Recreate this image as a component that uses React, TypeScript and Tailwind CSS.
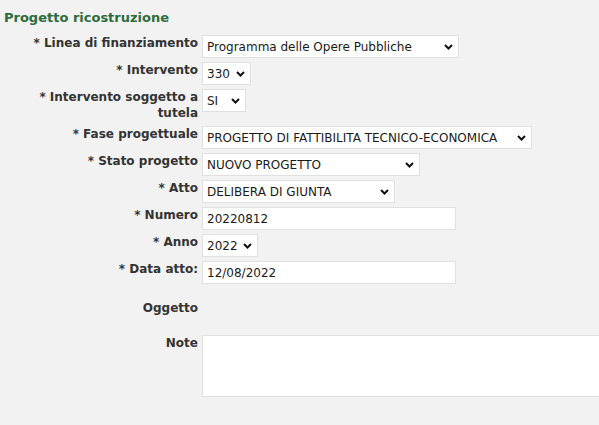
import type { ReactNode } from 'react';

const Chevron = () => (
    <svg
        className="pointer-events-none absolute right-[6px] top-[9px]"
        width="9"
        height="6"
        viewBox="0 0 9 6"
        fill="none"
    >
        <polyline points="1,1 4.5,4.5 8,1" stroke="#111" strokeWidth="2" />
    </svg>
);

const Select = ({ value, width }: { value: string; width: string }) => (
    <div className={`relative ${width}`}>
        <select
            defaultValue={value}
            className="h-[23px] w-full appearance-none border border-[#e0e0e0] bg-white pl-[4px] pr-[16px] text-[12px] text-[#1a1a1a] outline-none"
        >
            <option>{value}</option>
        </select>
        <Chevron />
    </div>
);

const TextInput = ({ value }: { value: string }) => (
    <input
        defaultValue={value}
        className="h-[23px] w-[254px] border border-[#e0e0e0] bg-white pl-[4px] text-[12px] text-[#1a1a1a] outline-none"
    />
);

const Row = ({ label, children, className = '' }: { label: string; children?: ReactNode; className?: string }) => (
    <div className={`flex items-start gap-[4px] py-[2px] ${className}`}>
        <label className="w-[170px] shrink-0 text-right text-[12px] font-bold leading-[16px] text-[#333]">
            {label}
        </label>
        {children}
    </div>
);

export default function App() {
    return (
        <div
            className="h-[425px] w-[599px] overflow-hidden bg-[#f2f2f2] text-[13px]"
            style={{ fontFamily: '"DejaVu Sans", Verdana, sans-serif' }}
        >
            <h2 className="mb-[7px] pl-[4px] pt-[10px] font-bold leading-[16px] text-[#2e6b3c]">
                Progetto ricostruzione
            </h2>
            <div className="pl-[28px]">
                <Row label="* Linea di finanziamento">
                    <Select value="Programma delle Opere Pubbliche" width="w-[257px]" />
                </Row>
                <Row label="* Intervento">
                    <Select value="330" width="w-[49px]" />
                </Row>
                <Row label="* Intervento soggetto a tutela" className="pb-[3px]">
                    <Select value="SI" width="w-[44px]" />
                </Row>
                <Row label="* Fase progettuale">
                    <Select value="PROGETTO DI FATTIBILITA TECNICO-ECONOMICA" width="w-[330px]" />
                </Row>
                <Row label="* Stato progetto">
                    <Select value="NUOVO PROGETTO" width="w-[218px]" />
                </Row>
                <Row label="* Atto">
                    <Select value="DELIBERA DI GIUNTA" width="w-[193px]" />
                </Row>
                <Row label="* Numero">
                    <TextInput value="20220812" />
                </Row>
                <Row label="* Anno">
                    <Select value="2022" width="w-[56px]" />
                </Row>
                <Row label="* Data atto:">
                    <TextInput value="12/08/2022" />
                </Row>
                <Row label="Oggetto" className="pb-[17px] pt-[14px]" />
                <Row label="Note">
                    <textarea className="h-[62px] w-[420px] shrink-0 resize-none border border-[#e0e0e0] bg-white outline-none" />
                </Row>
            </div>
        </div>
    );
}
